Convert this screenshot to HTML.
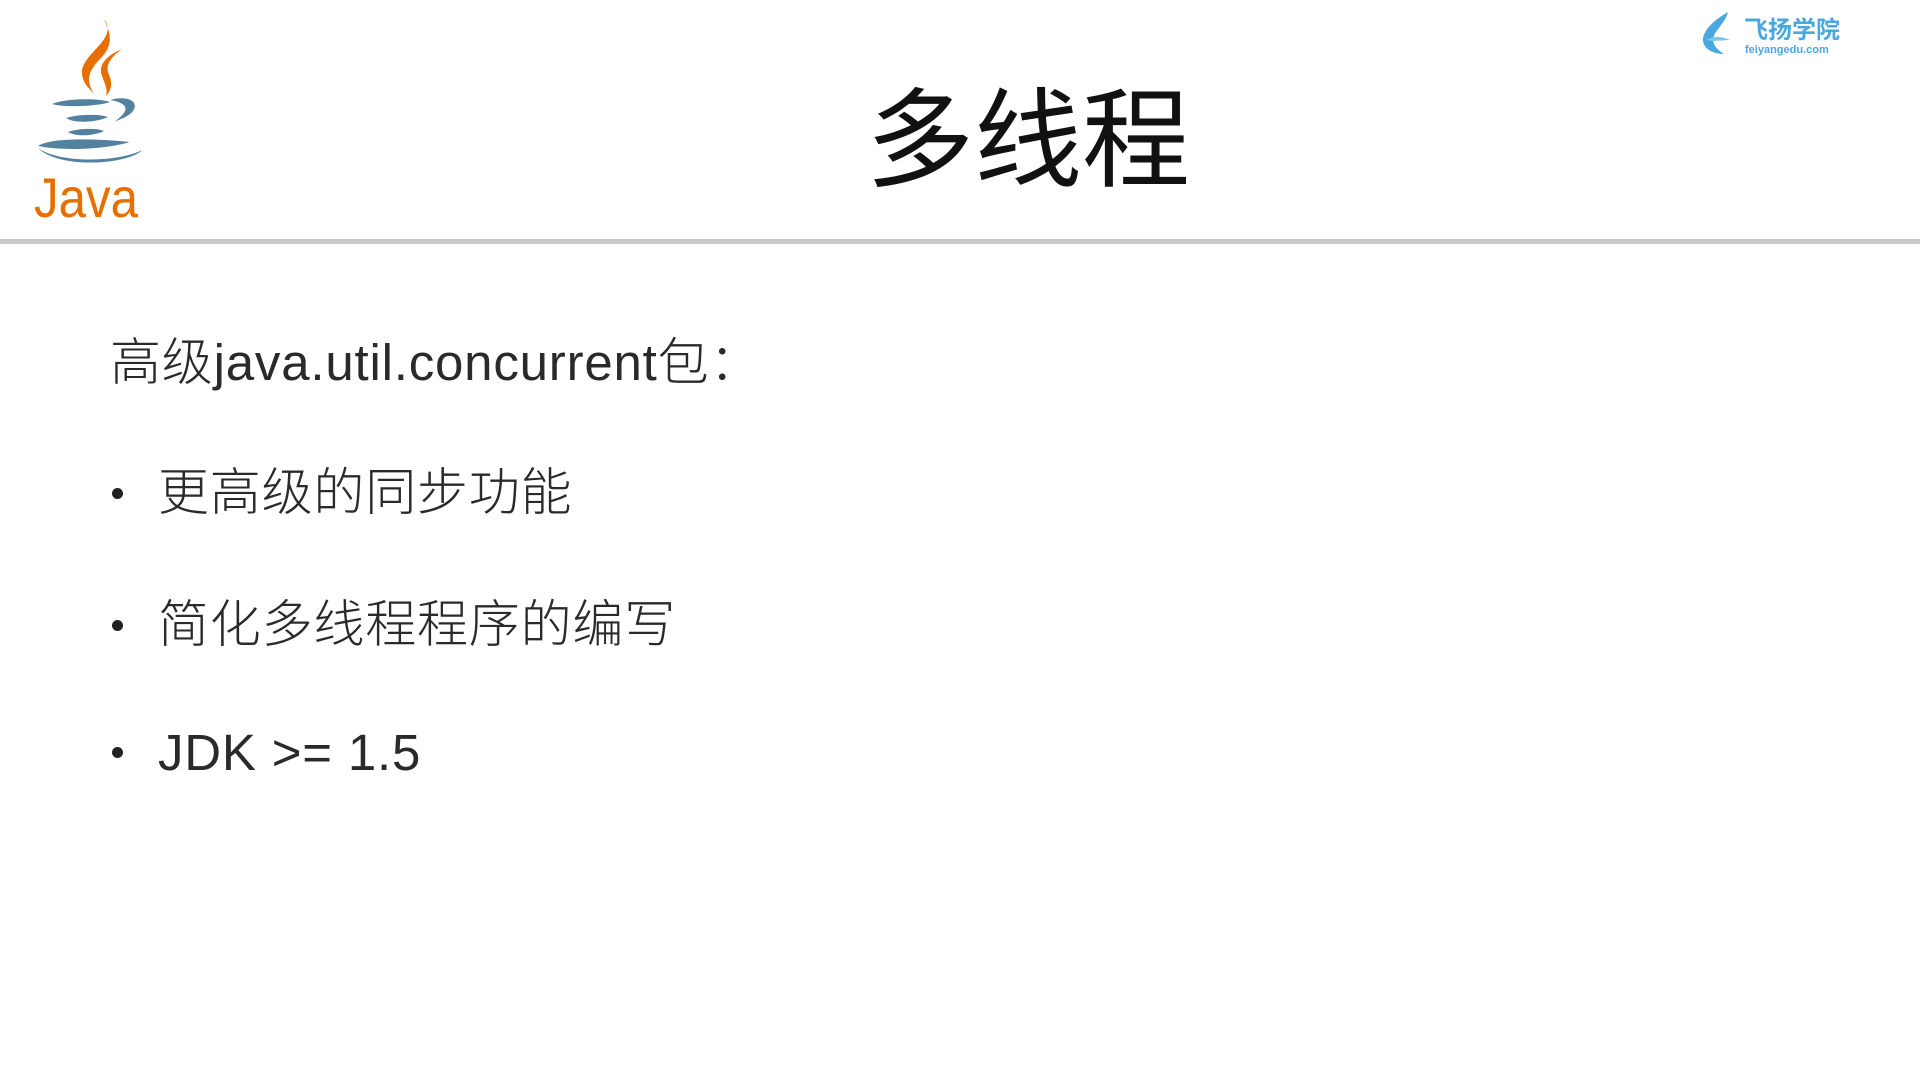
<!DOCTYPE html>
<html><head><meta charset="utf-8">
<style>
html,body{margin:0;padding:0;background:#fff;width:1920px;height:1080px;overflow:hidden;position:relative}
body{font-family:"Liberation Sans","Noto Sans CJK SC",sans-serif;color:#2a2a2a}
.t{position:absolute;white-space:nowrap;line-height:1}
.title{left:866px;top:87px;font-size:108px;color:#111}
.sep{position:absolute;left:0;top:239px;width:1920px;height:5px;background:#c9c9c9}
.l{font-size:51px;font-weight:300;letter-spacing:0.8px}
.dot{position:absolute;width:11px;height:11px;border-radius:50%;background:#222}
</style></head><body>
<svg style="position:absolute;left:30px;top:14px" width="120" height="212" viewBox="0 0 120 212">
<path d="M74 5 C90 25 50 40 52 60 C53 70 60 75 64 80 C58 70 55 60 70 45 C85 30 80 18 74 5Z" fill="#e76f00"/>
<path d="M92 35 C75 42 68 52 72 62 C75 70 78 76 76 82 C85 72 80 64 78 58 C76 50 82 42 92 35Z" fill="#e76f00"/>
<path d="M22 90 C35 84 70 84 80 88 C70 92 35 94 22 90Z" fill="#5382a1"/>
<path d="M80 86 C100 80 112 90 100 100 C95 104 88 106 84 108 C98 98 102 90 80 86Z" fill="#5382a1"/>
<path d="M36 104 C48 100 70 100 78 103 C68 108 45 110 36 104Z" fill="#5382a1"/>
<path d="M38 118 C48 114 68 114 74 117 C64 122 46 123 38 118Z" fill="#5382a1"/>
<path d="M8 132 C20 124 60 124 100 128 C80 134 40 138 8 132Z M8 134 C30 150 90 148 112 136 C100 150 30 156 8 134Z" fill="#5382a1"/>
<text x="4" y="203" font-family="Liberation Sans, sans-serif" font-size="56" fill="#e76f00" textLength="104" lengthAdjust="spacingAndGlyphs">Java</text>
</svg>
<svg style="position:absolute;left:1700px;top:10px" width="145" height="50" viewBox="0 0 145 50">
<path d="M28 2 C18 8 6 16 3 28 C2 38 12 44 24 44 C14 38 10 30 16 22 C20 16 26 10 28 2Z" fill="#4aa8e0"/>
<path d="M6 30 C14 26 22 26 30 30 C22 30 14 32 6 30Z" fill="#7cc4ee"/>
<text x="44" y="28" font-family="Noto Sans CJK SC, sans-serif" font-weight="bold" font-size="24" fill="#4aa8e0">飞扬学院</text>
<text x="45" y="43" font-family="Liberation Sans, sans-serif" font-weight="bold" font-size="11" fill="#4aa8e0">feiyangedu.com</text>
</svg>
<div class="t title">多线程</div>
<div class="sep"></div>
<div class="t l" style="left:110px;top:337px">高级java.util.concurrent包：</div>
<div class="dot" style="left:112px;top:488px"></div>
<div class="t l" style="left:158px;top:467px">更高级的同步功能</div>
<div class="dot" style="left:112px;top:620px"></div>
<div class="t l" style="left:158px;top:599px">简化多线程程序的编写</div>
<div class="dot" style="left:112px;top:747px"></div>
<div class="t l" style="left:158px;top:727px">JDK &gt;= 1.5</div>
</body></html>
